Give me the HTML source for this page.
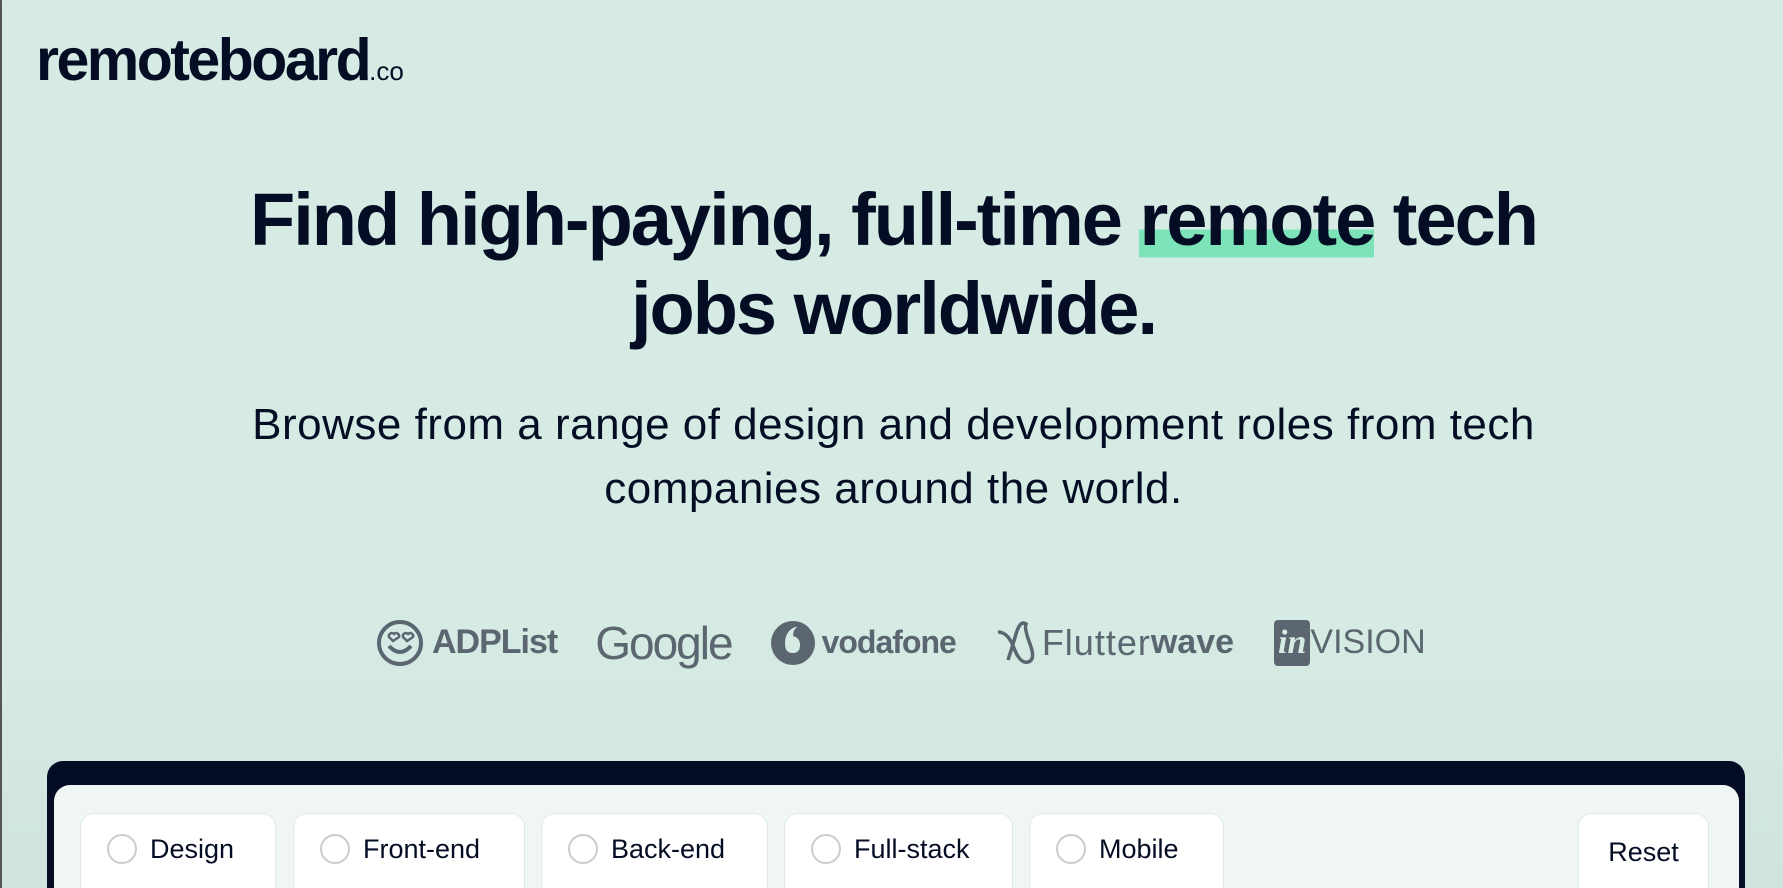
<!DOCTYPE html>
<html style="width:1783px;height:888px;overflow:hidden"><head><meta charset="utf-8"><style>
*{margin:0;padding:0;box-sizing:border-box}
body{width:1783px;height:888px;overflow:hidden;background:linear-gradient(#d6ebe4 0%,#d6ebe4 70%,#cfe4de 100%);font-family:"Liberation Sans",sans-serif;color:#050d24;position:relative;border-left:2px solid #555}
.logo{position:absolute;left:34px;top:26px;font-size:59px;font-weight:bold;letter-spacing:-2.5px}
.logo small{font-size:26px;letter-spacing:0;font-weight:normal}
h1{position:absolute;left:0;width:1783px;top:175px;text-align:center;font-size:74px;line-height:89px;letter-spacing:-2px;font-weight:bold}
.hl{background:linear-gradient(transparent 62%,#7de3b8 62%,#7de3b8 96%,transparent 96%)}
p.sub{position:absolute;left:0;width:1783px;top:393px;text-align:center;font-size:44px;line-height:64px;letter-spacing:.5px}
.logos{position:absolute;top:615px;left:374px;display:flex;align-items:center;color:#5c6670;font-weight:bold;font-size:34px;height:55px}
.panel{position:absolute;left:45px;top:761px;width:1698px;height:127px;background:#050d24;border-radius:16px 16px 0 0}
.inner{position:absolute;left:52px;top:785px;width:1685px;height:103px;background:#eff6f4;border-radius:16px 16px 0 0}
.chip{position:absolute;top:813px;height:75px;background:#fff;border:1px solid #e0ebe7;border-bottom:none;border-radius:14px 14px 0 0;font-size:27px;display:flex;align-items:flex-start;padding-top:20px}
.chip i{display:inline-block;width:30px;height:30px;border:2.5px solid #ccc;border-radius:50%;margin:0 13px 0 26px}
</style></head><body>
<div class="logo">remoteboard<small>.co</small></div>
<h1>Find high-paying, full-time <span class="hl">remote</span> tech<br>jobs worldwide.</h1>
<p class="sub">Browse from a range of design and development roles from tech<br>companies around the world.</p>
<div class="logos">
<svg width="48" height="48" viewBox="0 0 48 48" fill="none" stroke="#5c6670" stroke-width="4"><circle cx="24" cy="24" r="21"/><path d="M13 27q11 12 22 0"/><path d="M17 22l-4-4a3 3 0 015-3a3 3 0 015 3z M31 22l-4-4a3 3 0 015-3a3 3 0 015 3z" stroke-width="2.5"/></svg>
<span style="margin-left:8px;letter-spacing:-1px">ADPList</span>
<span style="margin-left:38px;font-weight:normal;font-size:46px;letter-spacing:-2px">Google</span>
<svg style="margin-left:38px" width="46" height="48" viewBox="0 0 46 48"><circle cx="23" cy="24" r="22" fill="#5c6670"/><path d="M25 8q-10 4-10 17q0 9 8 9q7 0 7-8q0-7-7-9q0-6 4-9z" fill="#d6ebe4"/></svg>
<span style="margin-left:6px;letter-spacing:-1px;font-size:32px">vodafone</span>
<svg style="margin-left:40px" width="44" height="46" viewBox="0 0 44 46" fill="none" stroke="#5c6670" stroke-width="3.5"><path d="M2 12q10 0 16 16t14 14q8-2 2-18T30 4q-6-4-10 10t-8 26"/></svg>
<span style="margin-left:2px;font-weight:normal;font-size:36px;letter-spacing:1px">Flutter</span><span style="font-size:34px">wave</span>
<span style="margin-left:40px;background:#5c6670;color:#d6ebe4;font-family:'Liberation Serif',serif;font-style:italic;font-size:34px;border-radius:4px;padding:0 4px;height:46px;line-height:46px">in</span><span style="font-weight:normal;font-size:34px">VISION</span>
</div>
<div class="panel"></div><div class="inner"></div>
<div class="chip" style="left:78px;width:196px"><i></i>Design</div>
<div class="chip" style="left:291px;width:232px"><i></i>Front-end</div>
<div class="chip" style="left:539px;width:227px"><i></i>Back-end</div>
<div class="chip" style="left:782px;width:229px"><i></i>Full-stack</div>
<div class="chip" style="left:1027px;width:195px"><i></i>Mobile</div>
<div class="chip" style="left:1576px;width:131px;justify-content:center;padding-top:23px">Reset</div>
</body></html>
